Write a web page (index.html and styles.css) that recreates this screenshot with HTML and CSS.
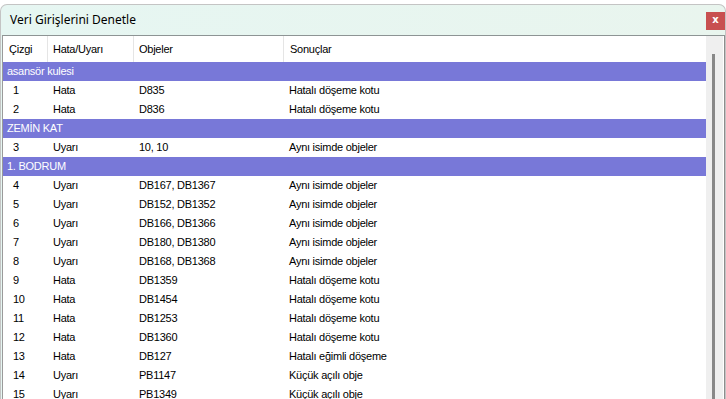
FILE: index.html
```html
<!DOCTYPE html>
<html>
<head>
<meta charset="utf-8">
<link rel="stylesheet" href="styles.css">
</head>
<body>
<div class="window">
  <div class="titlebar">
    <div class="title">Veri Girişlerini Denetle</div>
    <div class="close">x</div>
  </div>
  <div class="content">
    <div class="list">
      <div class="row header">
        <div class="c c1">Çizgi</div>
        <div class="c c2">Hata/Uyarı</div>
        <div class="c c3">Objeler</div>
        <div class="c c4">Sonuçlar</div>
      </div>
      <div class="group">asansör kulesi</div>
      <div class="row"><div class="c c1">1</div><div class="c c2">Hata</div><div class="c c3">D835</div><div class="c c4">Hatalı döşeme kotu</div></div>
      <div class="row"><div class="c c1">2</div><div class="c c2">Hata</div><div class="c c3">D836</div><div class="c c4">Hatalı döşeme kotu</div></div>
      <div class="group">ZEMİN KAT</div>
      <div class="row"><div class="c c1">3</div><div class="c c2">Uyarı</div><div class="c c3">10, 10</div><div class="c c4">Aynı isimde objeler</div></div>
      <div class="group">1. BODRUM</div>
      <div class="row"><div class="c c1">4</div><div class="c c2">Uyarı</div><div class="c c3">DB167, DB1367</div><div class="c c4">Aynı isimde objeler</div></div>
      <div class="row"><div class="c c1">5</div><div class="c c2">Uyarı</div><div class="c c3">DB152, DB1352</div><div class="c c4">Aynı isimde objeler</div></div>
      <div class="row"><div class="c c1">6</div><div class="c c2">Uyarı</div><div class="c c3">DB166, DB1366</div><div class="c c4">Aynı isimde objeler</div></div>
      <div class="row"><div class="c c1">7</div><div class="c c2">Uyarı</div><div class="c c3">DB180, DB1380</div><div class="c c4">Aynı isimde objeler</div></div>
      <div class="row"><div class="c c1">8</div><div class="c c2">Uyarı</div><div class="c c3">DB168, DB1368</div><div class="c c4">Aynı isimde objeler</div></div>
      <div class="row"><div class="c c1">9</div><div class="c c2">Hata</div><div class="c c3">DB1359</div><div class="c c4">Hatalı döşeme kotu</div></div>
      <div class="row"><div class="c c1">10</div><div class="c c2">Hata</div><div class="c c3">DB1454</div><div class="c c4">Hatalı döşeme kotu</div></div>
      <div class="row"><div class="c c1">11</div><div class="c c2">Hata</div><div class="c c3">DB1253</div><div class="c c4">Hatalı döşeme kotu</div></div>
      <div class="row"><div class="c c1">12</div><div class="c c2">Hata</div><div class="c c3">DB1360</div><div class="c c4">Hatalı döşeme kotu</div></div>
      <div class="row"><div class="c c1">13</div><div class="c c2">Hata</div><div class="c c3">DB127</div><div class="c c4">Hatalı eğimli döşeme</div></div>
      <div class="row"><div class="c c1">14</div><div class="c c2">Uyarı</div><div class="c c3">PB1147</div><div class="c c4">Küçük açılı obje</div></div>
      <div class="row"><div class="c c1">15</div><div class="c c2">Uyarı</div><div class="c c3">PB1349</div><div class="c c4">Küçük açılı obje</div></div>
    </div>
    <div class="scrollbar"><div class="thumb"></div></div>
  </div>
</div>
</body>
</html>
```
FILE: styles.css
```css
html, body {
  margin: 0;
  padding: 0;
  background: #ffffff;
  overflow: hidden;
}
body {
  width: 726px;
  height: 399px;
  padding-top: 4px;
  box-sizing: border-box;
}
.window {
  width: 726px;
  height: 395px;
  box-sizing: border-box;
  border: 1px solid #c4c4c4;
  border-bottom: none;
  border-radius: 7px 7px 0 0;
  background: linear-gradient(to right, #e6f6f2, #e9f5ee);
  display: flex;
  flex-direction: column;
  overflow: hidden;
}
.titlebar {
  height: 30px;
  display: flex;
  align-items: flex-start;
  flex-shrink: 0;
}
.title {
  font-family: "Noto Sans", sans-serif;
  font-size: 12px;
  color: #000;
  padding-left: 9px;
  line-height: 30px;
  height: 30px;
}
.close {
  margin-left: auto;
  margin-top: 7px;
  width: 19px;
  height: 18px;
  background: #c85050;
  color: #fff;
  font-family: "DejaVu Sans", sans-serif;
  font-weight: bold;
  font-size: 10px;
  line-height: 16px;
  text-align: center;
}
.content {
  flex: 1;
  display: flex;
  margin-left: 1px;
  border-top: 1px solid #8d9494;
  border-left: 1px solid #9a9a9a;
  border-right: 1px solid #8d8d8d;
  background: #fff;
  min-height: 0;
  overflow: hidden;
}
.list {
  width: 703px;
  background: #fff;
  font-family: "Liberation Sans", Arial, sans-serif;
  font-size: 11px;
  letter-spacing: -0.25px;
  color: #000;
}
.row {
  display: grid;
  grid-template-columns: 45px 86px 150px 1fr;
  height: 19px;
  line-height: 19px;
}
.row.header {
  height: 26px;
  line-height: 26px;
}
.c {
  white-space: nowrap;
  overflow: hidden;
  padding-left: 5px;
}
.row .c1 { padding-left: 10px; }
.header .c1 { padding-left: 6px; }
.header .c4 { padding-left: 6px; }
.header .c1, .header .c2, .header .c3 {
  border-right: 1px solid #e5e5e5;
}
.group {
  height: 19px;
  line-height: 19px;
  background: #7878d8;
  color: #fff;
  padding-left: 4px;
}
.scrollbar {
  width: 17px;
  background: #efefef;
  position: relative;
  flex-shrink: 0;
}
.thumb {
  position: absolute;
  left: 6px;
  top: 18px;
  width: 3px;
  height: 400px;
  background: #888888;
}
```
